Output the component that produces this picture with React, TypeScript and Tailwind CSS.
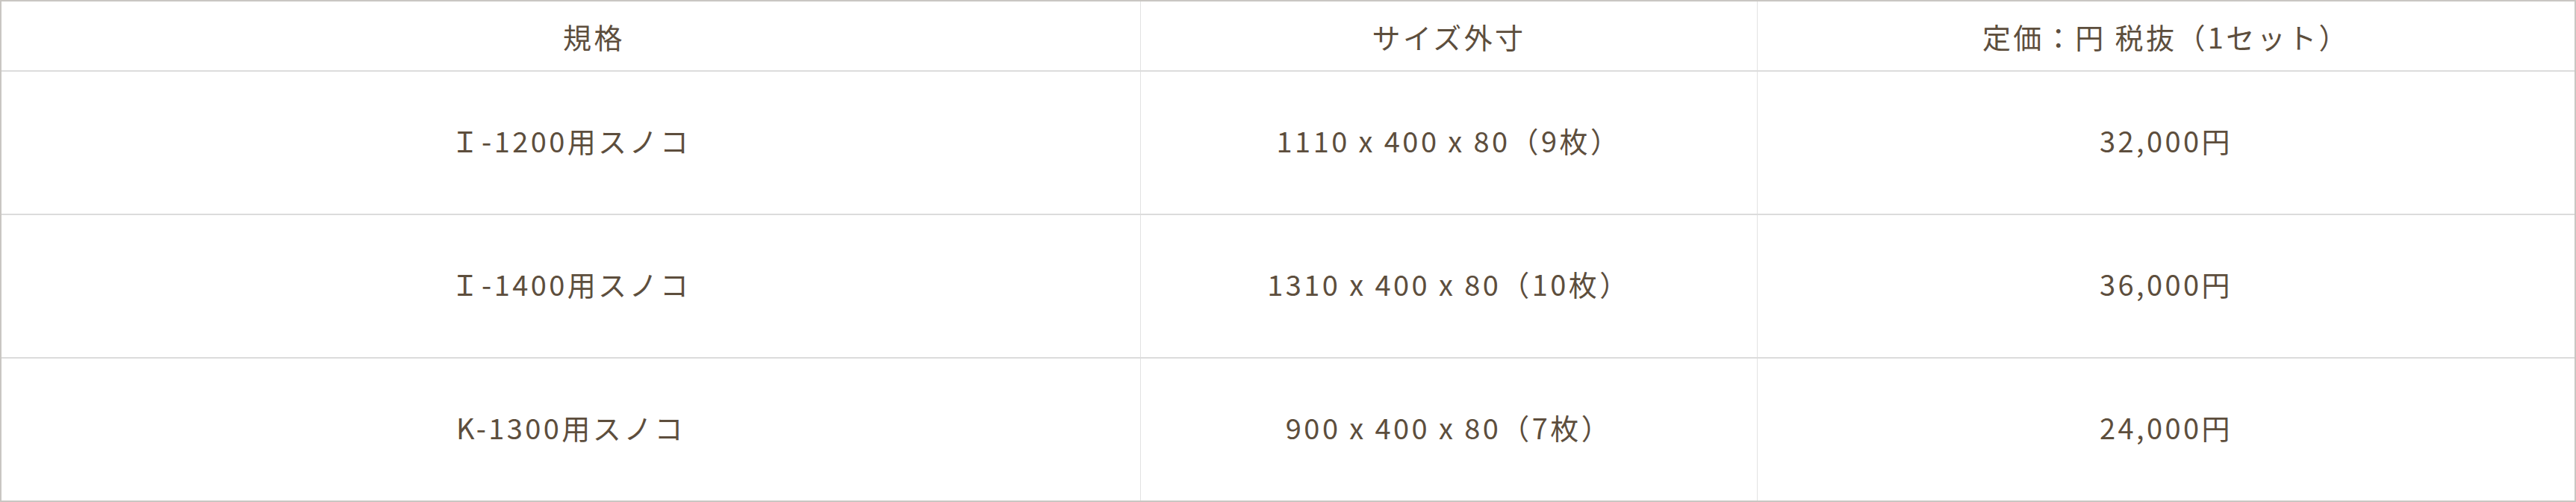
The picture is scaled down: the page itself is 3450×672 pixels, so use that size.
const rows = [
  { name: 'Ｉ-1200用スノコ', size: '1110 x 400 x 80（9枚）', price: '32,000円' },
  { name: 'Ｉ-1400用スノコ', size: '1310 x 400 x 80（10枚）', price: '36,000円' },
  { name: 'K-1300用スノコ', size: '900 x 400 x 80（7枚）', price: '24,000円' },
];

const cell = 'flex items-center justify-center';

const App = () => {
  return (
    <div className="w-[3450px] h-[672px] bg-white font-['Noto_Sans_CJK_JP','Noto_Sans',sans-serif] text-[38px] tracking-[0.09em] text-[#5d4e3d]">
      <div className="h-full border-2 border-[#c9c6c2] flex flex-col">
        <div className="grid grid-cols-[1526px_826px_1fr] h-[94px] shrink-0 border-b-2 border-[#dcdcdc]">
          <div className={`${cell} border-r border-[#e2e2e2] pl-[62px]`}>規格</div>
          <div className={`${cell} border-r border-[#e2e2e2]`}>サイズ外寸</div>
          <div className={cell}>定価：円 税抜（1セット）</div>
        </div>
        {rows.map((r, i) => (
          <div
            key={r.name}
            className={`grid grid-cols-[1526px_826px_1fr] shrink-0 ${i < rows.length - 1 ? 'h-[192px] border-b-2 border-[#dcdcdc]' : 'h-[190px]'}`}
          >
            <div className={`${cell} pb-[8px] border-r border-[#e2e2e2]`}>{r.name}</div>
            <div className={`${cell} pb-[8px] border-r border-[#e2e2e2]`}>{r.size}</div>
            <div className={`${cell} pb-[8px]`}>{r.price}</div>
          </div>
        ))}
      </div>
    </div>
  );
};

export default App;
